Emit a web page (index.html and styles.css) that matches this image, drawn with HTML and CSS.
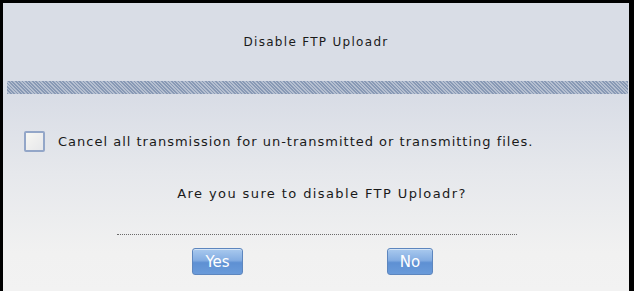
FILE: index.html
```html
<!DOCTYPE html>
<html>
<head>
<meta charset="utf-8">
<link rel="stylesheet" href="styles.css">
</head>
<body>
<div class="dialog">
  <div class="header">Disable FTP Uploadr</div>
  <div class="bar"></div>
  <div class="content">
    <label class="check-row">
      <span class="checkbox"></span>
      <span class="check-text">Cancel all transmission for un-transmitted or transmitting files.</span>
    </label>
    <div class="question">Are you sure to disable FTP Uploadr?</div>
    <div class="divider"></div>
    <div class="buttons">
      <button class="btn btn-yes">Yes</button>
      <button class="btn btn-no">No</button>
    </div>
  </div>
</div>
</body>
</html>
```

FILE: styles.css
```css
html, body {
  margin: 0;
  padding: 0;
}
body {
  background: #000;
  width: 634px;
  height: 291px;
  overflow: hidden;
  font-family: "DejaVu Sans", Verdana, sans-serif;
  font-size: 13px;
  letter-spacing: 1px;
  color: #1a1a1a;
}
.dialog {
  margin: 3px 5px 0 3px;
  height: 288px;
  background: linear-gradient(to bottom, #d9dde6 0px, #d9dde6 95px, #e6e8ec 170px, #f1f1f1 250px, #f2f2f2 288px);
}
.header {
  height: 78px;
  display: flex;
  align-items: center;
  justify-content: center;
  box-sizing: border-box;
  font-size: 12px;
  letter-spacing: 1.3px;
}
.bar {
  height: 13px;
  margin: 0 1px 0 4px;
  background: repeating-linear-gradient(45deg, #8899b5 0px, #8899b5 1.2px, #b5bfd0 1.2px, #b5bfd0 2.4px);
}
.content {
  display: flex;
  flex-direction: column;
}
.check-row {
  display: flex;
  align-items: center;
  margin-top: 37px;
  padding-left: 21px;
}
.checkbox {
  width: 17px;
  height: 17px;
  border: 2px solid #93a6c8;
  border-radius: 2px;
  background: linear-gradient(135deg, #f7f7f3 0%, #e6e7ea 100%);
  flex: none;
}
.check-text {
  margin-left: 13px;
}
.question {
  margin-top: 34px;
  margin-bottom: 2px;
  text-align: center;
  padding-left: 12px;
  letter-spacing: 1.4px;
}
.divider {
  margin: 31px 0 0 114px;
  width: 400px;
  border-top: 1px dotted #6a6a6a;
}
.buttons {
  display: flex;
  margin-top: 13px;
  padding-left: 189px;
  gap: 144px;
}
.btn {
  height: 27px;
  padding: 0;
  border: 1px solid #5d86be;
  border-radius: 3px;
  background: linear-gradient(to bottom, #a9c9ee 0%, #84ade2 45%, #5e90d3 55%, #6a9bda 100%);
  color: #fff;
  font-family: "DejaVu Sans", Verdana, sans-serif;
  font-size: 15px;
  letter-spacing: 0;
  font-weight: normal;
  box-shadow: inset 0 1px 0 rgba(255,255,255,0.5);
}
.btn-yes { width: 51px; }
.btn-no { width: 46px; }
```
